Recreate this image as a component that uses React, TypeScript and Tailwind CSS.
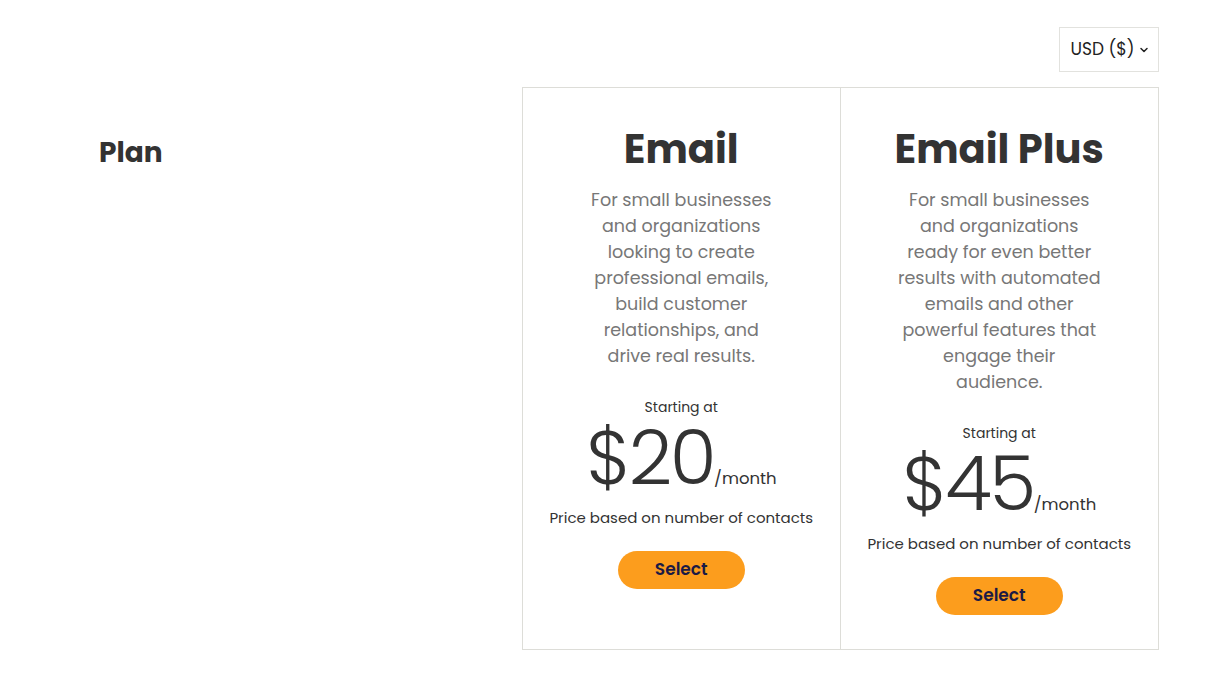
import { ChevronDown } from "lucide-react";

const plans = [
  {
    name: "Email",
    desc: [
      "For small businesses",
      "and organizations",
      "looking to create",
      "professional emails,",
      "build customer",
      "relationships, and",
      "drive real results.",
    ],
    price: "$20",
  },
  {
    name: "Email Plus",
    desc: [
      "For small businesses",
      "and organizations",
      "ready for even better",
      "results with automated",
      "emails and other",
      "powerful features that",
      "engage their",
      "audience.",
    ],
    price: "$45",
  },
];

const PlanCard = ({ plan, last }: { plan: (typeof plans)[number]; last?: boolean }) => {
  return (
    <div
      className={
        "flex flex-col items-center pt-[34px] text-center " +
        (last ? "" : "border-r border-[#ddddd8]")
      }
    >
      <h2 className="text-[40px] font-bold leading-[54px] text-[#333333]">{plan.name}</h2>
      <p className="mt-[11px] text-[17.5px] leading-[26px] text-[#777777]">
        {plan.desc.map((line) => (
          <span key={line} className="block">
            {line}
          </span>
        ))}
      </p>
      <div className="mt-[28px] text-[14px] leading-[20px] text-[#333333]">Starting at</div>
      <div className="mt-[6px] flex items-baseline text-[#333333]">
        <span className="text-[76px] font-light leading-[70px] tracking-[-2.5px]">{plan.price}</span>
        <span className="text-[16.5px] leading-[20px]">/month</span>
      </div>
      <div className="mt-[15px] text-[15px] leading-[20px] text-[#333333]">
        Price based on number of contacts
      </div>
      <button className="mt-[23px] h-[38px] w-[127px] rounded-full bg-[#fc9d1d] text-[17px] font-semibold text-[#1b1a45]">
        Select
      </button>
    </div>
  );
};

const App = () => {
  return (
    <div
      className="min-h-screen bg-white"
      style={{ fontFamily: "Poppins, 'DejaVu Sans', sans-serif" }}
    >
      <div className="ml-[99px] w-[1060px] pt-[27px]">
        <div className="flex justify-end">
          <button className="flex h-[45px] w-[100px] items-center justify-center gap-[3px] pl-[2px] pt-[1px] border border-[#e2e2de] text-[17px] text-[#222]">
            USD ($)
            <ChevronDown size={12} strokeWidth={3} />
          </button>
        </div>
        <div className="mt-[15px] grid grid-cols-[423px_1fr]">
          <div className="pt-[45px] text-[28px] font-bold text-[#333333]">Plan</div>
          <div className="grid h-[563px] grid-cols-2 border border-[#ddddd8]">
            {plans.map((p, i) => (
              <PlanCard key={p.name} plan={p} last={i === plans.length - 1} />
            ))}
          </div>
        </div>
      </div>
    </div>
  );
};

export default App;
